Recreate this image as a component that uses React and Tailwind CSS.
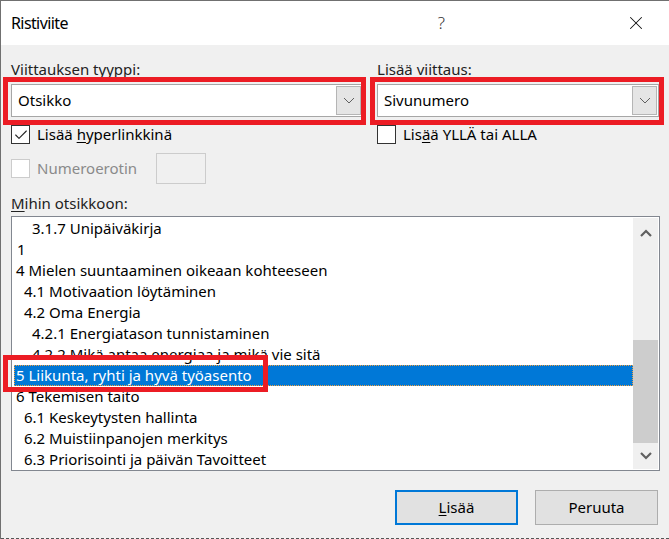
import { Check, X } from "lucide-react";

const headings = [
  { text: "3.1.7 Unipäiväkirja", level: 3 },
  { text: "1", level: 0 },
  { text: "4 Mielen suuntaaminen oikeaan kohteeseen", level: 1 },
  { text: "4.1 Motivaation löytäminen", level: 2 },
  { text: "4.2 Oma Energia", level: 2 },
  { text: "4.2.1 Energiatason tunnistaminen", level: 3 },
  { text: "4.2.2 Mikä antaa energiaa ja mikä vie sitä", level: 3 },
  { text: "5 Liikunta, ryhti ja hyvä työasento", level: 1, selected: true },
  { text: "6 Tekemisen taito", level: 1 },
  { text: "6.1 Keskeytysten hallinta", level: 2 },
  { text: "6.2 Muistiinpanojen merkitys", level: 2 },
  { text: "6.3 Priorisointi ja päivän Tavoitteet", level: 2 },
];

const indent = ["pl-[2px]", "pl-[1px]", "pl-[9px]", "pl-[17px]"];

function Chevron() {
  return (
    <svg width="12" height="7" viewBox="0 0 12 7">
      <path d="M1 1l5 5 5-5" fill="none" stroke="#606060" strokeWidth="1" />
    </svg>
  );
}

function Dropdown({ value }) {
  return (
    <div className="flex h-[33px] items-center border border-[#a6a6a6] bg-white p-[1px]">
      <span className="flex-1 pl-[5px] text-[15px] text-black">{value}</span>
      <span className="flex h-full w-[25px] items-center justify-center border border-[#b5b5b5] bg-[#e5e5e5]">
        <Chevron />
      </span>
    </div>
  );
}

function Box({ checked, disabled }) {
  return (
    <span
      className={`flex h-[19px] w-[19px] shrink-0 items-center justify-center border bg-white ${
        disabled ? "border-[#cccccc]" : "border-[#333333]"
      }`}
    >
      {checked && <Check size={16} strokeWidth={1.6} color="#222" />}
    </span>
  );
}

function ScrollArrow({ up }) {
  return (
    <svg width="12" height="8" viewBox="0 0 12 8">
      <path
        d={up ? "M1 7l5-5 5 5" : "M1 1l5 5 5-5"}
        fill="none"
        stroke="#606060"
        strokeWidth="2.2"
      />
    </svg>
  );
}

export default function App() {
  return (
    <div
      className="relative h-[539px] w-[669px] overflow-hidden border-l border-t border-[#707070] bg-[#f0f0f0] text-[15px] text-black"
      style={{ fontFamily: '"Noto Sans", "Open Sans", sans-serif' }}
    >
      {/* title bar */}
      <div className="flex h-[44px] items-center bg-white">
        <span className="ml-[10px] flex-1 text-[16px] tracking-[-0.6px]">Ristiviite</span>
        <span className="mr-[180px] text-[17px] font-light text-[#333]">?</span>
        <X size={22} strokeWidth={1.1} color="#111" className="mr-[22px]" />
      </div>

      <div className="px-[10px] pt-[13px]">
        <div className="flex gap-[14px]">
          {/* left column */}
          <div className="w-[352px]">
            <div className="h-[22px] leading-[22px] text-[#222]">
              <span className="underline underline-offset-2">V</span>iittauksen tyyppi:
            </div>
            <div className="mt-[4px]">
              <Dropdown value="Otsikko" />
            </div>
            <label className="mt-[8px] flex h-[19px] items-center gap-[7px] leading-[19px]">
              <Box checked />
              <span>
                Lisää <span className="underline underline-offset-2">h</span>yperlinkkinä
              </span>
            </label>
            <div className="mt-[9px] flex h-[31px] items-center">
              <Box disabled />
              <span className="ml-[7px] text-[#8a8a8a]">Numeroerotin</span>
              <span className="ml-[19px] h-[31px] w-[50px] border border-[#cccccc] bg-[#f0f0f0]" />
            </div>
          </div>

          {/* right column */}
          <div className="w-[282px]">
            <div className="h-[22px] leading-[22px] text-[#222]">
              L<span className="underline underline-offset-2">i</span>sää viittaus:
            </div>
            <div className="mt-[4px]">
              <Dropdown value="Sivunumero" />
            </div>
            <label className="mt-[8px] flex h-[19px] items-center gap-[7px] leading-[19px]">
              <Box />
              <span>
                Lis<span className="underline underline-offset-2">ä</span>ä YLLÄ tai ALLA
              </span>
            </label>
          </div>
        </div>

        <div className="mt-[8px] h-[22px] leading-[22px] text-[#222]">
          <span className="underline underline-offset-2">M</span>ihin otsikkoon:
        </div>

        {/* heading list */}
        <div className="mt-[2px] flex h-[255px] w-[649px] border border-[#828790] bg-white p-[1px]">
          <div className="flex-1">
            {headings.map((h, i) => (
              <div
                key={i}
                className={`ml-[1px] h-[21px] whitespace-nowrap leading-[19px] ${indent[h.level]} ${
                  h.selected
                    ? "border border-dotted border-[#f0a040] bg-[#0078d7] text-white"
                    : "border border-transparent"
                }`}
              >
                {h.text}
              </div>
            ))}
          </div>
          <div className="flex w-[25px] flex-col bg-[#f0f0f0]">
            <div className="flex h-[30px] items-center justify-center">
              <ScrollArrow up />
            </div>
            <div className="h-[92px]" />
            <div className="h-[103px] bg-[#cdcdcd]" />
            <div className="flex flex-1 items-center justify-center">
              <ScrollArrow />
            </div>
          </div>
        </div>

        {/* buttons */}
        <div className="mt-[19px] flex justify-end gap-[17px] pr-[1px]">
          <button className="h-[35px] w-[123px] border-2 border-[#0078d7] bg-[#e1e1e1] text-[15px]">
            <span className="underline underline-offset-2">L</span>isää
          </button>
          <button className="h-[35px] w-[123px] border border-[#adadad] bg-[#e1e1e1] text-[15px]">
            Peruuta
          </button>
        </div>
      </div>

      {/* bottom edge of the dialog frame */}
      <div className="absolute bottom-0 left-0 right-0 border-b border-dashed border-[#555]" />

      {/* highlight frames */}
      <div className="pointer-events-none absolute left-[2px] top-[76px] h-[48px] w-[363px] border-[5px] border-[#ec1c24]" />
      <div className="pointer-events-none absolute left-[369px] top-[76px] h-[48px] w-[294px] border-[5px] border-[#ec1c24]" />
      <div className="pointer-events-none absolute left-[2px] top-[354px] h-[37px] w-[265px] border-[5px] border-[#ec1c24]" />
    </div>
  );
}
